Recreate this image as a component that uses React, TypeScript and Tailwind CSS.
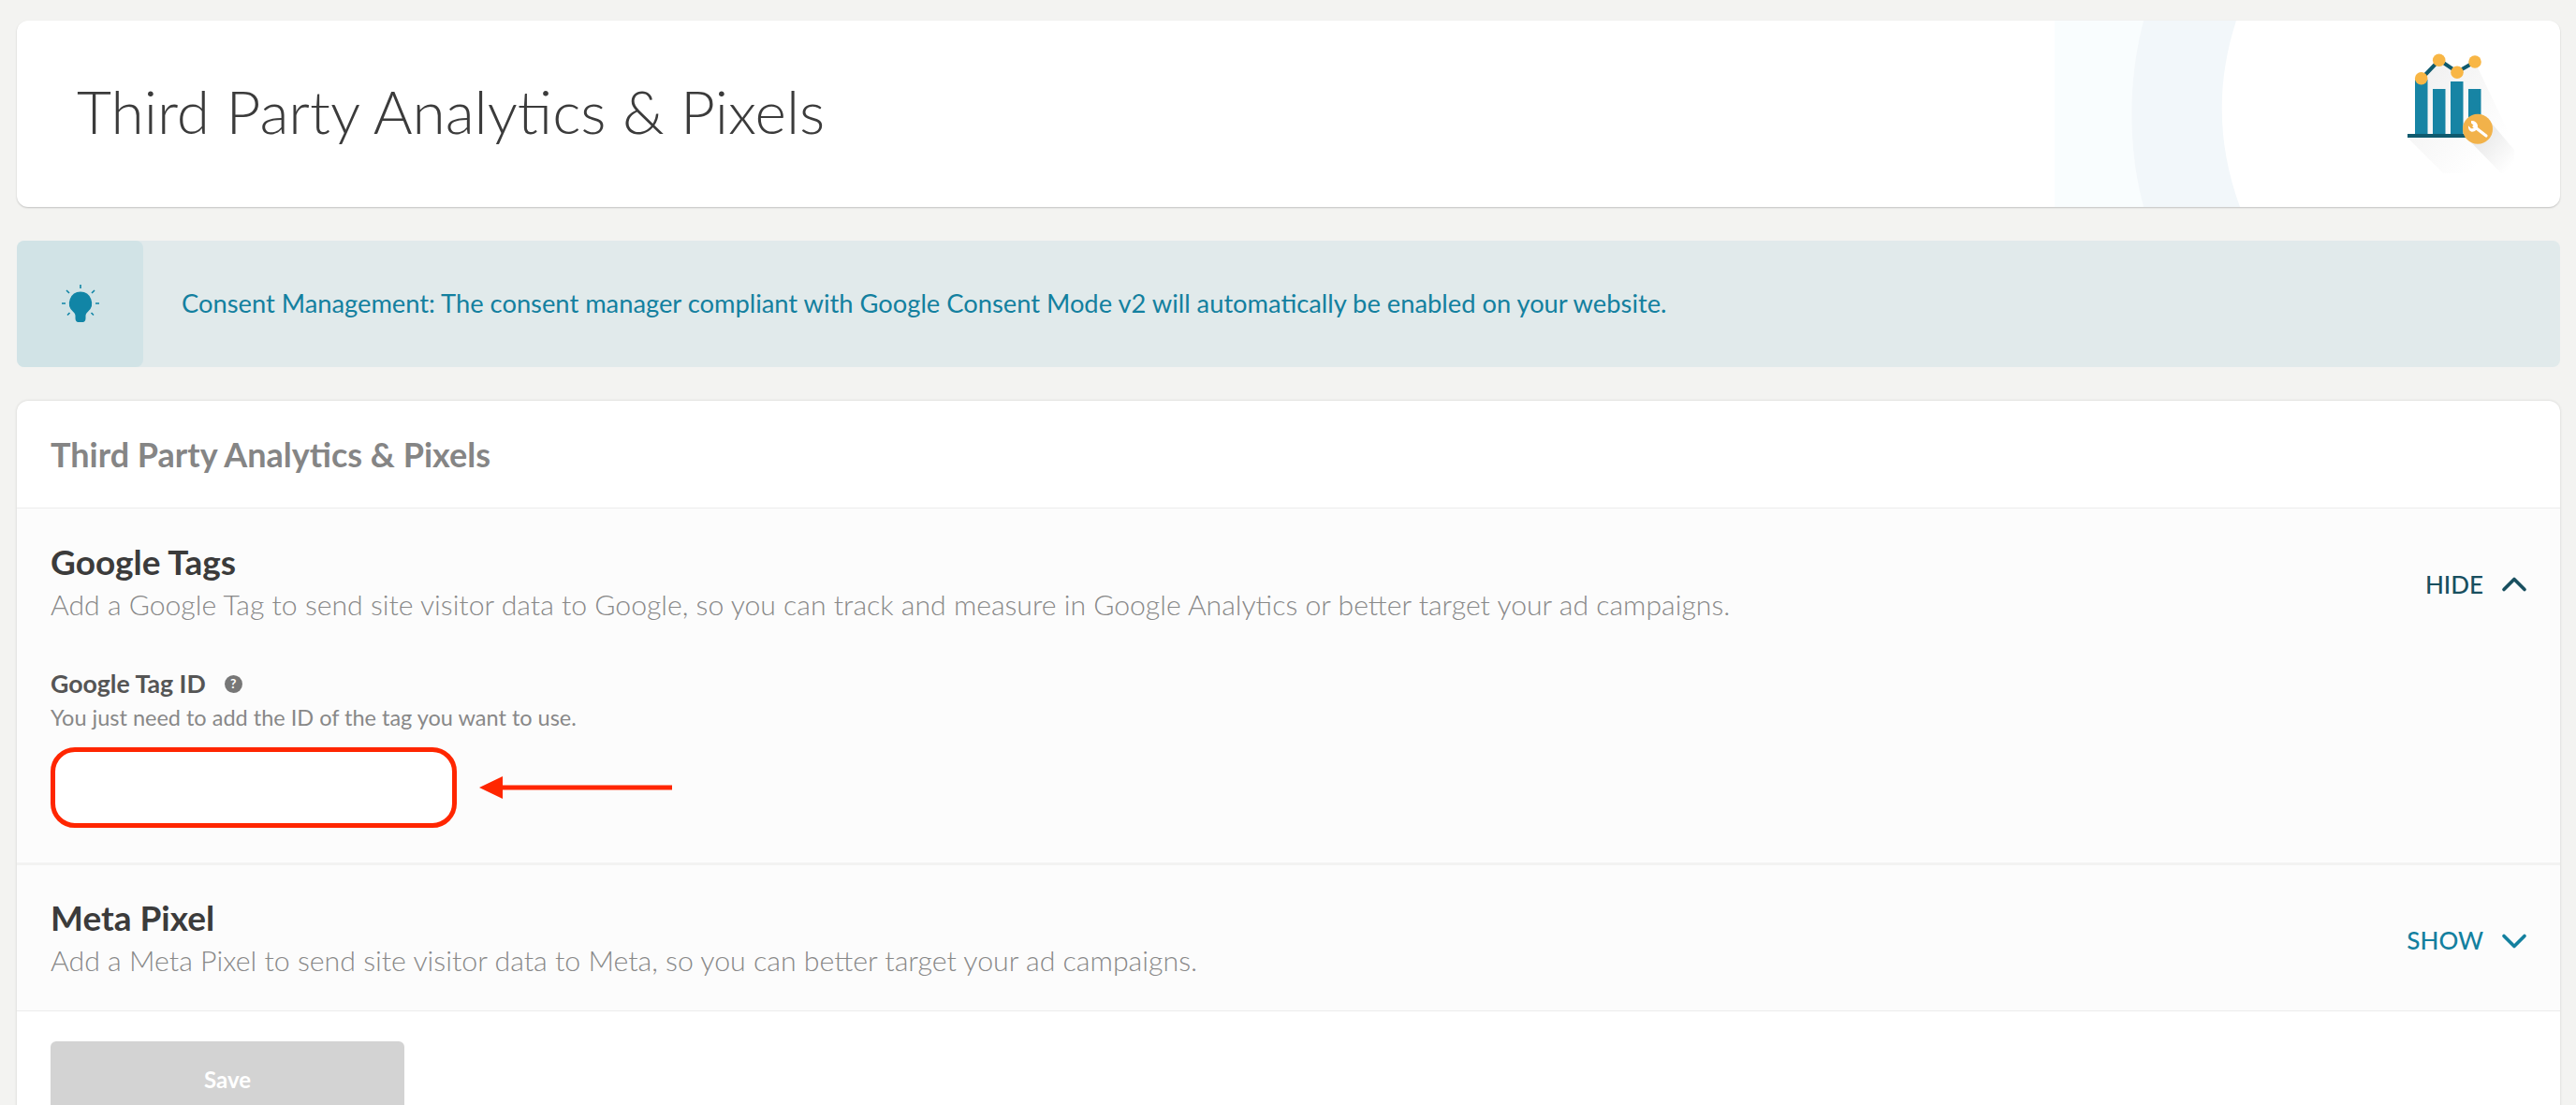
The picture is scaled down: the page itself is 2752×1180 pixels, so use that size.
import { ChevronDown, ChevronUp } from 'lucide-react';

function BannerBands() {
  return (
    <svg className="absolute inset-0 h-full w-full" viewBox="0 0 2717 199" preserveAspectRatio="none">
      <path d="M2177 0H2272C2255 65 2255 135 2272 199H2177Z" fill="#f9fdfe" />
      <path d="M2272 0H2371C2350 65 2350 130 2375 199H2272C2255 135 2255 65 2272 0Z" fill="#f2f7fa" />
    </svg>
  );
}

function ChartLogo() {
  return (
    <svg className="absolute right-[45px] top-[18px]" width="150" height="160" viewBox="0 0 150 160">
      <defs>
        <linearGradient id="shade" x1="0" y1="0" x2="1" y2="1">
          <stop offset="0" stopColor="#eeeeee" />
          <stop offset="0.8" stopColor="#ffffff" />
        </linearGradient>
        <linearGradient id="shade2" x1="0" y1="0" x2="1" y2="1">
          <stop offset="0" stopColor="#dedede" />
          <stop offset="0.9" stopColor="#ffffff" />
        </linearGradient>
      </defs>
      <path d="M32 107L70 145H145V112L104 26L85 37L66 24L47 44V103H100V107Z" fill="url(#shade)" />
      <path d="M96 108L132 145H146V120L118 87Z" fill="url(#shade2)" />
      <path d="M47 44L66 24L85 37L104 26" fill="none" stroke="#0f5a6e" strokeWidth="4" />
      <rect x="40" y="45" width="13.5" height="60" fill="#1784a4" />
      <rect x="59" y="55" width="13.5" height="50" fill="#1784a4" />
      <rect x="78" y="47" width="13.5" height="58" fill="#1784a4" />
      <rect x="97" y="55" width="13.5" height="50" fill="#1784a4" />
      <rect x="32" y="103" width="65" height="4" fill="#0f5a6e" />
      <circle cx="46.7" cy="43.7" r="6.8" fill="#f8b645" />
      <circle cx="65.7" cy="24.3" r="6.8" fill="#f8b645" />
      <circle cx="85" cy="37.3" r="6.8" fill="#f8b645" />
      <circle cx="104" cy="26" r="6.8" fill="#f8b645" />
      <circle cx="107" cy="97.7" r="16" fill="#f2b24a" />
      <path d="M103 95L116 105" stroke="#ffffff" strokeWidth="3.200" strokeLinecap="round" />
      <path d="M100 91.500l3.500 3-.5 2.500-3 .3-3-3a6 6 0 0 0 3.500 6.500 6 6 0 0 0 6.500-6.500 6 6 0 0 0-7-5.300z" fill="#ffffff" />
    </svg>
  );
}

function BulbIcon() {
  return (
    <svg width="42" height="44" viewBox="0 0 42 44">
      <path
        d="M21 8.500a12.200 12.200 0 0 0-8 21.300c1.800 1.600 2.500 3 2.500 4.700v2.500c0 2.500 1.500 4 3 4h5c1.500 0 3-1.500 3-4v-2.500c0-1.700.7-3.100 2.500-4.700a12.200 12.200 0 0 0-8-21.300z"
        fill="#1185a6"
      />
      <path
        d="M21 1v4M6 7l3 3M36 7l-3 3M1 21h4M37 21h4M7 33.500l2.500-2.500M35 33.500L32.500 31"
        stroke="#1185a6"
        strokeWidth="1.600"
        fill="none"
      />
    </svg>
  );
}

function HelpDot() {
  return (
    <span className="ml-[20px] flex h-[19px] w-[19px] items-center justify-center rounded-full bg-[#777777] text-[14px] font-bold leading-none text-white">
      ?
    </span>
  );
}

export default function App() {
  return (
    <div className="h-screen overflow-hidden bg-[#f3f3f1] pl-[18px] pr-[17px] pt-[22px] font-['Lato',sans-serif]">
      <header className="relative flex h-[199px] items-center overflow-hidden rounded-[12px] bg-white pb-[6px] pl-[64px] shadow-[0_1px_2px_rgba(0,0,0,0.2)]">
        <BannerBands />
        <ChartLogo />
        <h1 className="relative text-[64px] font-light text-[#3b3b3b]">Third Party Analytics &amp; Pixels</h1>
      </header>

      <div className="mt-[36px] flex h-[135px] items-center rounded-[8px] bg-[#e1eaeb]">
        <div className="flex h-full w-[135px] items-center justify-center rounded-[8px] bg-[#d1e3e6]">
          <BulbIcon />
        </div>
        <p className="ml-[41px] text-[27.300px] text-[#13809f]">
          Consent Management: The consent manager compliant with Google Consent Mode v2 will automatically be enabled on
          your website.
        </p>
      </div>

      <main className="mt-[36px] overflow-hidden rounded-t-[12px] bg-white shadow-[0_0_3px_rgba(0,0,0,0.15)]">
        <div className="flex h-[115px] items-center border-b border-[#ececec] pl-[36px]">
          <h2 className="text-[36px] font-bold text-[#858585]">Third Party Analytics &amp; Pixels</h2>
        </div>

        <section className="h-[381px] border-b-[3px] border-[#f3f3f2] bg-[#fcfcfc] px-[36px] pt-[33px]">
          <div className="flex items-center justify-between">
            <div>
              <h3 className="text-[37px] font-bold leading-[48px] text-[#3b3b3b]">Google Tags</h3>
              <p className="text-[30.200px] font-light leading-[42px] text-[#888888]">
                Add a Google Tag to send site visitor data to Google, so you can track and measure in Google Analytics or
                better target your ad campaigns.
              </p>
            </div>
            <button type="button" className="mr-[-9px] flex items-center gap-[11px] pt-[6px] text-[26px] font-medium text-[#184f5f]">
              HIDE
              <ChevronUp size={44} strokeWidth={2} />
            </button>
          </div>
          <div className="mt-[46px] flex items-center text-[26.700px] font-bold leading-[36px] text-[#555555]">
            Google Tag ID
            <HelpDot />
          </div>
          <p className="text-[23.500px] leading-[36px] text-[#888888]">You just need to add the ID of the tag you want to use.</p>
          <div className="mt-[14px] flex items-center">
            <div className="h-[86px] w-[434px] rounded-[26px] border-[5px] border-[#ff2600] bg-white" />
            <svg className="ml-[24px]" width="206" height="26" viewBox="0 0 206 26">
              <path d="M0 13L25 1V10.500H206V15.500H25V25Z" fill="#ff2600" />
            </svg>
          </div>
        </section>

        <section className="flex h-[156px] items-center justify-between border-b border-[#ececec] bg-[#fcfcfc] px-[36px]">
          <div className="pb-[2px]">
            <h3 className="text-[37px] font-bold leading-[48px] text-[#3b3b3b]">Meta Pixel</h3>
            <p className="text-[30.300px] font-light leading-[42px] text-[#888888]">
              Add a Meta Pixel to send site visitor data to Meta, so you can better target your ad campaigns.
            </p>
          </div>
          <button type="button" className="mr-[-9px] flex items-center gap-[11px] pt-[6px] text-[26px] font-medium text-[#13809f]">
            SHOW
            <ChevronDown size={44} strokeWidth={2} />
          </button>
        </section>

        <div className="px-[36px] pt-[32px]">
          <button type="button" className="h-[82px] w-[378px] rounded-[6px] bg-[#d3d3d3] text-[24px] font-bold text-white">
            Save
          </button>
        </div>
      </main>
    </div>
  );
}
